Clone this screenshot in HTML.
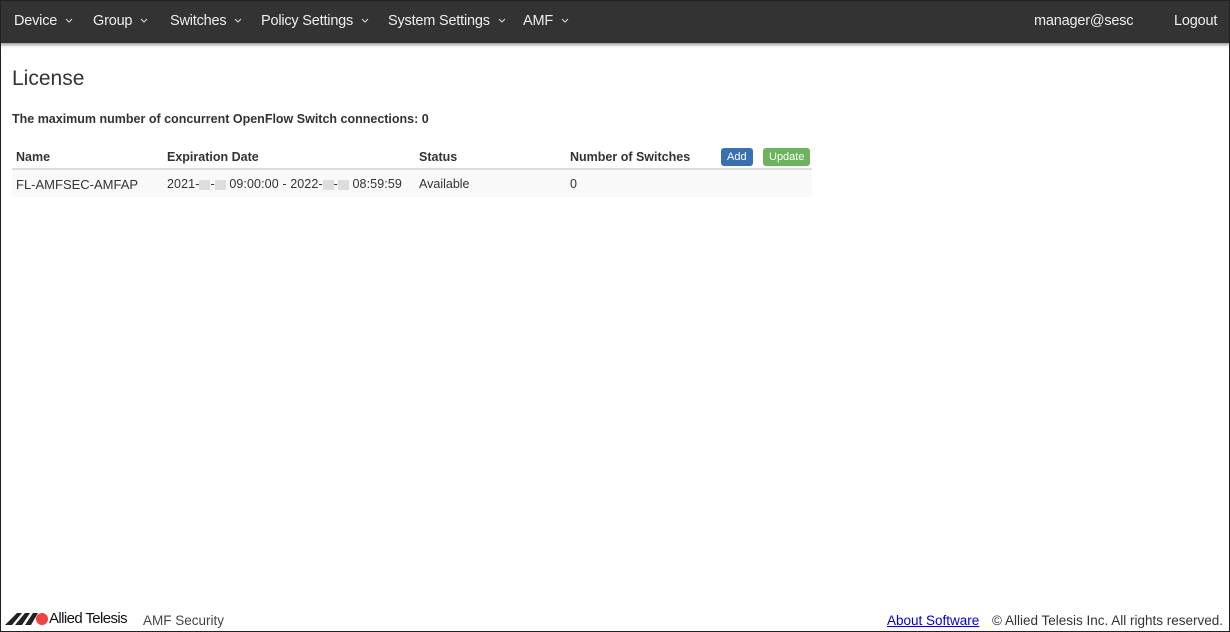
<!DOCTYPE html>
<html><head><style>
html,body{margin:0;padding:0}
body{width:1230px;height:632px;position:relative;overflow:hidden;font-family:"Liberation Sans",sans-serif;color:#333;background:#fff}
.frame{position:absolute;left:0;top:0;width:1228px;height:630px;border:1px solid #222;pointer-events:none;z-index:5}
.nav{position:absolute;left:0;top:0;width:1230px;height:43px;background:#333;box-shadow:0 2px 3px rgba(0,0,0,.4)}
.nav span{position:absolute;top:13px;color:#eee;font-size:14.5px;white-space:nowrap;letter-spacing:-.2px}
.nav span svg{margin-left:8px;vertical-align:middle;position:relative;top:-1px}
h1{position:absolute;left:12px;top:67px;margin:0;font-size:21px;font-weight:normal;color:#333}
.max{position:absolute;left:12px;top:112px;font-size:12.5px;font-weight:bold}
table{position:absolute;left:12px;top:146px;width:800px;border-collapse:collapse;font-size:12.5px}
th{text-align:left;height:22px;border-bottom:2px solid #ddd;padding:0 0 0 4px;vertical-align:middle}
td{height:26px;background:#f9f9f9;padding:1px 0 0 4px}
.btn{display:inline-block;color:#fff;font-size:11px;font-weight:normal;padding:3px 6px;border-radius:3px}
.blur{display:inline-block;width:11px;height:10px;background:#ddd;vertical-align:middle}
.foot{position:absolute;top:613px;font-size:13.5px;white-space:nowrap}
</style></head><body>
<div class="nav">
<span style="left:14px">Device<svg width="8" height="5"><path d="M1 1l3 3 3-3" stroke="#ddd" fill="none"/></svg></span>
<span style="left:93px">Group<svg width="8" height="5"><path d="M1 1l3 3 3-3" stroke="#ddd" fill="none"/></svg></span>
<span style="left:170px">Switches<svg width="8" height="5"><path d="M1 1l3 3 3-3" stroke="#ddd" fill="none"/></svg></span>
<span style="left:261px">Policy Settings<svg width="8" height="5"><path d="M1 1l3 3 3-3" stroke="#ddd" fill="none"/></svg></span>
<span style="left:388px">System Settings<svg width="8" height="5"><path d="M1 1l3 3 3-3" stroke="#ddd" fill="none"/></svg></span>
<span style="left:523px">AMF<svg width="8" height="5"><path d="M1 1l3 3 3-3" stroke="#ddd" fill="none"/></svg></span>
<span style="left:1034px">manager@sesc</span>
<span style="left:1174px">Logout</span>
</div>
<h1>License</h1>
<div class="max">The maximum number of concurrent OpenFlow Switch connections: 0</div>
<table>
<tr><th style="width:147px">Name</th><th style="width:248px">Expiration Date</th><th style="width:147px">Status</th><th style="width:147px">Number of Switches</th><th><span class="btn" style="background:#3a6fb0">Add</span>&nbsp;&nbsp;&nbsp;<span class="btn" style="background:#6cb35e">Update</span></th></tr>
<tr><td style="font-size:13px">FL-AMFSEC-AMFAP</td><td style="letter-spacing:.1px">2021-<span class="blur"></span>-<span class="blur"></span> 09:00:00 - 2022-<span class="blur"></span>-<span class="blur"></span> 08:59:59</td><td>Available</td><td>0</td><td></td></tr>
</table>
<svg style="position:absolute;left:5px;top:612px" width="44" height="14"><polygon points="0,13 12,1 17,1 7,13" fill="#222"/><polygon points="10,13 20,1 25,1 17,13" fill="#222"/><polygon points="20,13 28,1 33,1 26,13" fill="#222"/><circle cx="37" cy="7" r="6" fill="#e44"/></svg>
<div class="foot" style="left:49px;top:610px;font-size:15px;color:#111;letter-spacing:-.6px">Allied Telesis</div>
<div class="foot" style="left:143px;color:#444">AMF Security</div>
<div class="foot" style="left:887px;color:#00c;text-decoration:underline">About Software</div>
<div class="foot" style="left:992px;color:#333">© Allied Telesis Inc. All rights reserved.</div>
<div class="frame"></div>
</body></html>
